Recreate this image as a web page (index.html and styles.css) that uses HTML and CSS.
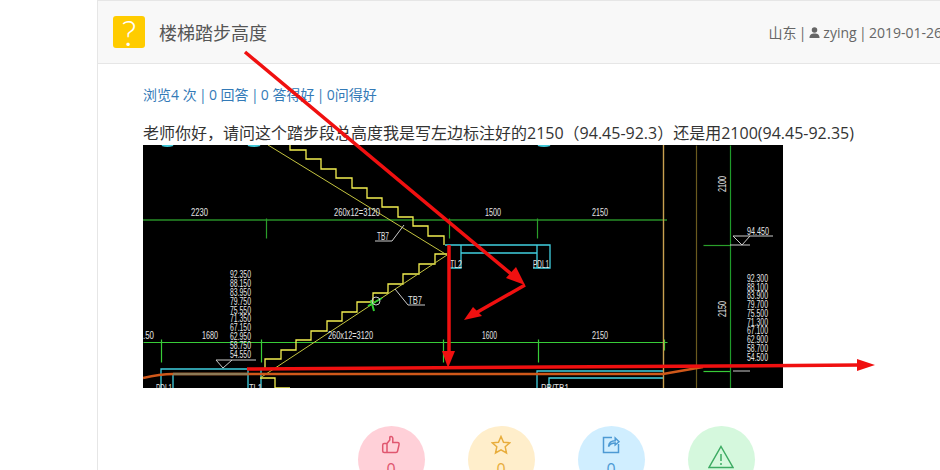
FILE: index.html
```html
<!DOCTYPE html>
<html lang="zh-CN">
<head>
    <meta charset="UTF-8">
    <title>楼梯踏步高度</title>
    <link rel="stylesheet" href="styles.css">
</head>
<body>
<div class="card">
    <div class="card-head">
        <div class="q-mark">?</div>
        <h1>楼梯踏步高度</h1>
        <div class="meta">
            山东 <span class="sep">|</span> <svg class="user-icon" viewBox="0 0 12 12"><circle cx="6" cy="3.2" r="3"/><path d="M0.5 12c0-3.6 2-5 5.500-5s5.500 1.400 5.500 5z"/></svg> zying <span class="sep">|</span> 2019-01-26
        </div>
    </div>
    <div class="card-body">
        <div class="stats">浏览4 次 <span class="sep">|</span> 0 回答 <span class="sep">|</span> 0 答得好 <span class="sep">|</span> 0问得好</div>
        <p class="question">老师你好，请问这个踏步段总高度我是写左边标注好的2150（94.45-92.3）还是用2100(94.45-92.35)</p>

        <!-- the attached CAD drawing -->
        <svg class="cad" viewBox="143 145 640 243" width="640" height="243">
            <rect x="143" y="145" width="640" height="243" fill="#000"/>

            <g class="c-line">
                <path d="M445 245H550V268H533M461 245V268H450M461 253H537M537 245V268"/>
                <path d="M161 388V369H265M173 374V388M248 369V388M261 369V388"/>
                <path d="M664 371H537V388M664 378H549V388"/>
            </g>
            <path class="c-arc" d="M162 145q5 2 11 0M248 145q6 2 12 0M538 145q6 2 12 0"/>

            <path class="g-dark" d="M143 220H667"/>
            <g class="g-tick snap">
                <path d="M266 218V238M449 218V238M537 218V238"/>
                <path d="M703 245H730"/>
            </g>
            <g class="g-line snap">
                <path d="M143 342H667M161 339V362M261 339V362M443 339V362M538 339V362M664 339V350"/>
                <path d="M703 371H730"/>
            </g>
            <path class="v-olive snap" d="M696 145V388"/>
            <path class="v-green snap" d="M730 145V388"/>
            <path class="v-tan" d="M663.500 145V388"/>

            <polyline class="y-line" points="290,145 290,150 306,150 306,159 321,159 321,169 336,169 336,178 352,178 352,188 367,188 367,198 382,198 382,207 398,207 398,217 413,217 413,226 428,226 428,236 444,236 444,245"/>
            <polyline class="y-line" points="265,369 265,359 281,359 281,350 296,350 296,340 311,340 311,331 327,331 327,321 342,321 342,312 357,312 357,302 373,302 373,293 388,293 388,284 403,284 403,274 419,274 419,264 435,264 435,254 447,254"/>
            <polyline class="y-line" points="260,378 275,378 275,388 290,388"/>
            <path class="y-thin" d="M268 145L447 255L260 378"/>

            <path class="o-line" d="M143 378Q160 374 173 374H663L703 367"/>
            <path class="b-line" d="M173 374H248"/>

            <g class="w-line">
                <path d="M375 241H392L404 225M395 289L408 305H425"/>
                <path d="M216 360H256M216 360L223 368L232 360"/>
                <path d="M733 236H773M733 236L742 245L750 236M730 245H750M733 371H750"/>
            </g>
            <path class="g-mark" d="M368 306L382 298M371 300L374 311"/>
            <circle class="w-line" cx="376" cy="301" r="4"/>

            <g class="cad-text">
                <text x="191" y="216" textLength="17" lengthAdjust="spacingAndGlyphs">2230</text>
                <text x="334" y="216" textLength="46" lengthAdjust="spacingAndGlyphs">260x12=3120</text>
                <text x="485" y="216" textLength="16" lengthAdjust="spacingAndGlyphs">1500</text>
                <text x="592" y="216" textLength="16" lengthAdjust="spacingAndGlyphs">2150</text>
                <text x="377" y="240" textLength="12" lengthAdjust="spacingAndGlyphs">TB7</text>
                <text x="408" y="304" textLength="14" lengthAdjust="spacingAndGlyphs">TB7</text>
                <text x="450" y="268" textLength="12" lengthAdjust="spacingAndGlyphs">TL2</text>
                <text x="533" y="268" textLength="16" lengthAdjust="spacingAndGlyphs">PDL1</text>
                <text x="143" y="339" textLength="11" lengthAdjust="spacingAndGlyphs">.50</text>
                <text x="202" y="339" textLength="16" lengthAdjust="spacingAndGlyphs">1680</text>
                <text x="328" y="339" textLength="45" lengthAdjust="spacingAndGlyphs">260x12=3120</text>
                <text x="482" y="339" textLength="15" lengthAdjust="spacingAndGlyphs">1600</text>
                <text x="592" y="339" textLength="16" lengthAdjust="spacingAndGlyphs">2150</text>
                <text x="156" y="392" textLength="16" lengthAdjust="spacingAndGlyphs">PDL1</text>
                <text x="249" y="392" textLength="13" lengthAdjust="spacingAndGlyphs">TL1</text>
                <text x="541" y="392" textLength="28" lengthAdjust="spacingAndGlyphs">PB/TB1</text>
                <text x="747" y="235" textLength="22" lengthAdjust="spacingAndGlyphs">94.450</text>
                <text transform="translate(726 192) rotate(-90)" textLength="16" lengthAdjust="spacingAndGlyphs">2100</text>
                <text transform="translate(726 317) rotate(-90)" textLength="16" lengthAdjust="spacingAndGlyphs">2150</text>

                <text>
                    <tspan x="230" y="278" textLength="21" lengthAdjust="spacingAndGlyphs">92.350</tspan>
                    <tspan x="230" y="287" textLength="21" lengthAdjust="spacingAndGlyphs">88.150</tspan>
                    <tspan x="230" y="296" textLength="21" lengthAdjust="spacingAndGlyphs">83.950</tspan>
                    <tspan x="230" y="305" textLength="21" lengthAdjust="spacingAndGlyphs">79.750</tspan>
                    <tspan x="230" y="314" textLength="21" lengthAdjust="spacingAndGlyphs">75.550</tspan>
                    <tspan x="230" y="322" textLength="21" lengthAdjust="spacingAndGlyphs">71.350</tspan>
                    <tspan x="230" y="331" textLength="21" lengthAdjust="spacingAndGlyphs">67.150</tspan>
                    <tspan x="230" y="340" textLength="21" lengthAdjust="spacingAndGlyphs">62.950</tspan>
                    <tspan x="230" y="349" textLength="21" lengthAdjust="spacingAndGlyphs">58.750</tspan>
                    <tspan x="230" y="358" textLength="21" lengthAdjust="spacingAndGlyphs">54.550</tspan>
                </text>

                <text>
                    <tspan x="747" y="282" textLength="21" lengthAdjust="spacingAndGlyphs">92.300</tspan>
                    <tspan x="747" y="291" textLength="21" lengthAdjust="spacingAndGlyphs">88.100</tspan>
                    <tspan x="747" y="299" textLength="21" lengthAdjust="spacingAndGlyphs">83.900</tspan>
                    <tspan x="747" y="308" textLength="21" lengthAdjust="spacingAndGlyphs">79.700</tspan>
                    <tspan x="747" y="317" textLength="21" lengthAdjust="spacingAndGlyphs">75.500</tspan>
                    <tspan x="747" y="326" textLength="21" lengthAdjust="spacingAndGlyphs">71.300</tspan>
                    <tspan x="747" y="334" textLength="21" lengthAdjust="spacingAndGlyphs">67.100</tspan>
                    <tspan x="747" y="343" textLength="21" lengthAdjust="spacingAndGlyphs">62.900</tspan>
                    <tspan x="747" y="352" textLength="21" lengthAdjust="spacingAndGlyphs">58.700</tspan>
                    <tspan x="747" y="361" textLength="21" lengthAdjust="spacingAndGlyphs">54.500</tspan>
                </text>
            </g>
        </svg>

        <div class="actions">
            <div class="action like">
                <svg viewBox="0 0 20 20"><path d="M6 8.500L8.800 5V2.500C8.800 1.200 11.500 1 11.800 3.200V7.500H16.500C18 7.500 18.300 8.500 18 9.800L16.600 16C16.400 17 15.800 17.500 15 17.500H3.200C2.200 17.500 1.700 17 1.700 16V10C1.700 9 2.200 8.500 3.200 8.500H6V17.500"/></svg>
                <span>0</span>
            </div>
            <div class="action star">
                <svg viewBox="0 0 20 20"><path d="M10 1.500L12.500 7.200L18.800 7.800L14.200 11.800L15.500 18L10 14.900L4.500 18L5.800 11.800L1.200 7.800L7.500 7.200Z"/></svg>
                <span>0</span>
            </div>
            <div class="action share">
                <svg viewBox="0 0 20 20"><path d="M11 2.500H2.500V17.500H17.500V9"/><path d="M7.500 11.500C8 7.500 11 5.800 14.200 5.800V3L18 6.800L14.200 10V8C11.500 8 9 9 7.500 11.500Z"/></svg>
                <span>0</span>
            </div>
            <div class="action warn">
                <svg viewBox="0 0 26 24"><path d="M13 1.500L25 22.500H1Z"/><path d="M13 9V16M13 18V20"/></svg>
            </div>
        </div>
    </div>
</div>

<!-- red markup drawn over the page by whoever posted the question -->
<svg class="markup" viewBox="0 0 940 470" width="940" height="470">
    <path d="M245 52L516 278M525 285L474 314M449 245V355M247 369L860 365"/>
    <polygon points="525,285 506,278 516,267"/>
    <polygon points="464,320 473,307 482,316"/>
    <polygon points="448,368 442,351 455,351"/>
    <polygon points="875,365 857,359 857,371"/>
</svg>
</body>
</html>
```

FILE: styles.css
```css
html, body {
  margin: 0;
  padding: 0;
  background: white;
  overflow: hidden;
}
body {
  position: relative;
  width: 940px;
  height: 470px;
  font-family: "Open Sans", "Noto Sans CJK SC", sans-serif;
  font-size: 14px;
  color: #333;
}

/* the | of Open Sans sits in a very wide box */
.sep {
  margin: 0 -1.350px;
}

.card {
  margin-left: 97px;
  width: 916px;
  border-left: 1px solid #e6e6e6;
  border-top: 1px solid #e6e6e6;
}

.card-head {
  display: flex;
  align-items: center;
  height: 62px;
  padding: 0 72px 0 15px;
  background: #f8f8f8;
  border-bottom: 1px solid #e6e6e6;
}
.q-mark {
  width: 32px;
  height: 32px;
  flex: none;
  border-radius: 3px;
  background: #ffcc00;
  color: white;
  font-family: Lato, sans-serif;
  font-weight: 300;
  font-size: 36px;
  line-height: 32px;
  text-align: center;
}
.card-head h1 {
  margin: 0 0 0 14px;
  font-size: 18px;
  font-weight: normal;
  color: #555;
  font-family: "Noto Sans CJK SC", sans-serif;
}
.meta {
  margin-left: auto;
  white-space: nowrap;
  color: #666;
}
.user-icon {
  width: 11px;
  height: 11px;
  fill: #666;
}

.card-body {
  padding: 21px 45px 0;
}
.stats {
  line-height: 20px;
  color: #337ab7;
}
.question {
  margin: 16px 0 0;
  font-size: 16px;
  line-height: 24px;
  white-space: nowrap;
}

.cad {
  display: block;
}
.cad path, .cad polyline, .cad circle {
  fill: none;
}
/* moves 1px lines onto whole pixels so they stay bright */
.snap {
  transform: translate(0.5px, 0.5px);
}
.cad-text text {
  font-family: "Liberation Sans", sans-serif;
  font-size: 11px;
  fill: #e4e4e4;
}
.c-line {
  stroke: #40d0e0;
  stroke-width: 1.300;
}
.c-arc {
  stroke: #40c8d8;
  stroke-width: 2;
}
.g-dark {
  stroke: #1d6a1d;
  stroke-width: 2;
}
.g-tick {
  stroke: #2a9e2a;
  stroke-width: 1.200;
}
.g-line {
  stroke: #38cc38;
  stroke-width: 1.200;
}
.v-olive {
  stroke: #6b5a1e;
  stroke-width: 1.200;
}
.v-green {
  stroke: #1f9a2a;
  stroke-width: 1.200;
}
.v-tan {
  stroke: #c8a050;
  stroke-width: 1.400;
}
.y-line {
  stroke: #f4f050;
  stroke-width: 1.300;
}
.y-thin {
  stroke: #c4c440;
}
.o-line {
  stroke: #d0581a;
  stroke-width: 2.600;
}
.b-line {
  stroke: #8d7a55;
  stroke-width: 2.600;
}
.w-line {
  stroke: #ccc;
}
.g-mark {
  stroke: #30d030;
  stroke-width: 2;
}

.actions {
  display: flex;
  justify-content: center;
  gap: 43px;
  margin-top: 38px;
}
.action {
  width: 67px;
  height: 67px;
  flex: none;
  border-radius: 50%;
  display: flex;
  flex-direction: column;
  align-items: center;
  padding-top: 9px;
  box-sizing: border-box;
  font-size: 16px;
  line-height: 20px;
}
.action svg {
  width: 20px;
  height: 20px;
  margin-bottom: 4px;
  fill: none;
  stroke: currentColor;
  stroke-width: 1.500;
}
.like {
  background: #ffd0d8;
  color: #e0566f;
}
.star {
  background: #ffeecb;
  color: #e8ad3c;
}
.share {
  background: #d0eeff;
  color: #4d9ad4;
}
.warn {
  background: #d5f8dd;
  color: #3dab63;
  padding-top: 19px;
}
.warn svg {
  width: 26px;
  height: 24px;
}

.markup {
  position: absolute;
  left: 0;
  top: 0;
  pointer-events: none;
}
.markup path {
  fill: none;
  stroke: #f01010;
  stroke-width: 3.500;
}
.markup polygon {
  fill: #f01010;
}
```
